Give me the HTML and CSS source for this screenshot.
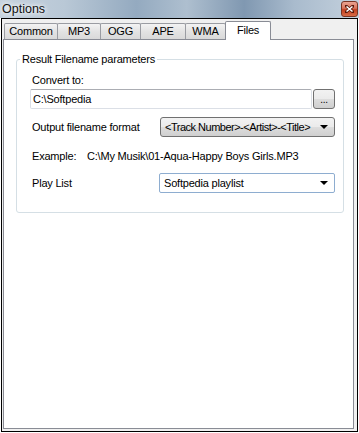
FILE: index.html
```html
<!DOCTYPE html>
<html lang="en">
<head>
<meta charset="UTF-8">
<title>Options</title>
<link rel="stylesheet" href="styles.css">
</head>
<body>

<div class="titlebar">
    <span class="title">Options</span>
    <div class="close-btn">
        <svg width="9" height="8" viewBox="0 0 9 8">
            <path d="M1 1 L8 7 M8 1 L1 7" stroke="#5a1a0c" stroke-width="3" stroke-linecap="square"/>
            <path d="M1.5 1.5 L7.5 6.5 M7.5 1.5 L1.5 6.5" stroke="#fff" stroke-width="1.6"/>
        </svg>
    </div>
</div>

<div class="frame">
    <div class="tabs">
        <div class="tab tab-common">Common</div>
        <div class="tab tab-mp3">MP3</div>
        <div class="tab tab-ogg">OGG</div>
        <div class="tab tab-ape">APE</div>
        <div class="tab tab-wma">WMA</div>
        <div class="tab tab-files active">Files</div>
    </div>

    <div class="page">
        <fieldset class="group">
            <legend>Result Filename parameters</legend>

            <div class="label convert-label">Convert to:</div>
            <div class="path-row">
                <div class="textbox">C:\Softpedia</div>
                <div class="browse-btn">...</div>
            </div>

            <div class="field-row format-row">
                <div class="label format-label">Output filename format</div>
                <div class="combo combo-btn format-combo">
                    <span class="combo-text">&lt;Track Number&gt;-&lt;Artist&gt;-&lt;Title&gt;</span>
                    <span class="arrow"></span>
                </div>
            </div>

            <div class="field-row example-row">
                <div class="label example-label">Example:</div>
                <div class="label">C:\My Musik\01-Aqua-Happy Boys Girls.MP3</div>
            </div>

            <div class="field-row playlist-row">
                <div class="label playlist-label">Play List</div>
                <div class="combo combo-edit playlist-combo">
                    <span>Softpedia playlist</span>
                    <span class="arrow"></span>
                </div>
            </div>
        </fieldset>
    </div>
</div>

</body>
</html>
```

FILE: styles.css
```css
body {
    margin: 0;
    background: #fff;
    font-family: "Liberation Sans", Arial, sans-serif;
    font-size: 11px;
    letter-spacing: -0.2px;
    color: #000;
}
.titlebar {
    height: 18px;
    display: flex;
    align-items: center;
    justify-content: space-between;
    background: linear-gradient(90deg, #c6d2de 0%, #b9c8d6 18%, #94aac0 38%, #aebfcf 52%, #8098b1 68%, #a9bbcd 82%, #c4d1dd 100%);
}
.title {
    padding-left: 2px;
    font-size: 12.5px;
    letter-spacing: 0;
    color: #111;
    text-shadow: 0 0 4px #fff, 0 0 6px #fff;
}
.close-btn {
    width: 15px;
    height: 14px;
    margin-right: 1px;
    border: 1px solid #7a3524;
    border-radius: 3px;
    background: linear-gradient(#eaa593 0%, #d9735a 45%, #c1401f 55%, #d86a45 100%);
    display: flex;
    align-items: center;
    justify-content: center;
}
.frame {
    margin-left: 1px;
    width: 354px;
    height: 412px;
    border: 1px solid #000;
    background: #f0f0f0;
    padding-left: 1px;
    box-sizing: content-box;
}
.tabs {
    display: flex;
    align-items: flex-end;
    height: 20px;
    padding-left: 1px;
}
.tab {
    height: 15px;
    border: 1px solid #9a9ca2;
    border-bottom: none;
    margin-right: -1px;
    background: linear-gradient(#f3f3f3, #e3e3e3 50%, #d9d9d9);
    text-align: center;
    line-height: 15px;
    box-sizing: content-box;
    border-radius: 2px 2px 0 0;
}
.tab-common { width: 52px; }
.tab-mp3 { width: 42px; }
.tab-ogg { width: 39px; }
.tab-ape { width: 44px; }
.tab-wma { width: 39px; }
.tab.active {
    width: 44px;
    height: 18px;
    line-height: 16px;
    margin-bottom: -1px;
    background: #fff;
    border-color: #898c95;
    position: relative;
    z-index: 1;
}
.page {
    width: 349px;
    height: 388px;
    border: 1px solid #898c95;
    background: #fff;
    box-sizing: content-box;
}
.group {
    margin: 13px 9px 0 12px;
    padding: 0 0 19px 0;
    border: 1px solid #d5dfe5;
    border-radius: 3px;
    min-width: 0;
}
.group legend {
    margin-left: 3px;
    padding: 0 2px;
    line-height: 13px;
}
.label {
    line-height: 13px;
    white-space: nowrap;
}
.convert-label {
    margin: 8px 0 0 15px;
}
.path-row {
    display: flex;
    gap: 1px;
    margin: 2px 0 0 13px;
}
.textbox {
    width: 278px;
    height: 18px;
    line-height: 18px;
    padding-left: 2px;
    border: 1px solid #dbdfe6;
    border-top-color: #abadb3;
    border-radius: 2px;
    background: #fff;
}
.browse-btn {
    width: 20px;
    height: 18px;
    border: 1px solid #707070;
    border-radius: 3px;
    background: linear-gradient(#f2f2f2, #ebebeb 50%, #dddddd 51%, #cfcfcf);
    text-align: center;
    line-height: 20px;
    font-size: 10px;
}
.field-row {
    display: flex;
    align-items: center;
    margin-left: 15px;
}
.format-row {
    margin-top: 8px;
}
.format-label {
    width: 128px;
}
.example-row {
    margin-top: 13px;
}
.example-label {
    width: 55px;
}
.playlist-row {
    margin-top: 10px;
}
.playlist-label {
    width: 127px;
}
.combo {
    height: 18px;
    display: flex;
    align-items: center;
    justify-content: space-between;
    padding: 0 6px 0 4px;
    white-space: nowrap;
}
.combo-btn {
    width: 163px;
    border: 1px solid #707070;
    border-radius: 3px;
    background: linear-gradient(#f2f2f2, #ebebeb 50%, #dddddd 51%, #cfcfcf);
}
.combo-text {
    letter-spacing: -0.5px;
}
.combo-edit {
    width: 164px;
    border: 1px solid #8eadd0;
    border-radius: 2px;
    background: #fff;
}
.arrow {
    width: 0;
    height: 0;
    border-left: 4px solid transparent;
    border-right: 4px solid transparent;
    border-top: 4px solid #000;
}
```
